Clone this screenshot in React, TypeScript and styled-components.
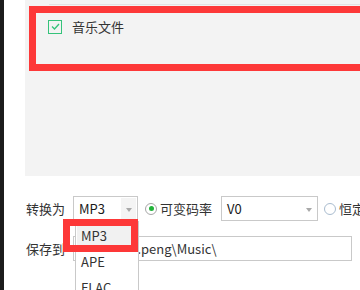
import React from 'react';
import styled, { createGlobalStyle } from 'styled-components';

const GlobalStyle = createGlobalStyle`
  html, body {
    margin: 0;
    padding: 0;
    background: #fff;
  }
  body {
    width: 360px;
    height: 290px;
    overflow: hidden;
    font-family: "Noto Sans CJK SC", "Microsoft YaHei", sans-serif;
    font-size: 13px;
    color: #333;
  }
`;

const Window = styled.div`
  position: relative;
  display: flex;
  width: 360px;
  height: 290px;
  overflow: hidden;
`;

const EdgeStrip = styled.div`
  width: 4px;
  flex-shrink: 0;
  background: #1c1c1c;
`;

const Body = styled.div`
  flex: 1;
  min-width: 0;
  padding-left: 21px;
  display: flex;
  flex-direction: column;
`;

const FilePanel = styled.div`
  height: 176px;
  box-sizing: border-box;
  padding-top: 4px;
  background: #f3f3f3;
`;

const Divider = styled.div`
  height: 1px;
  margin-left: 24px;
  background: #e2e2e2;
`;

const RedFrame = styled.div`
  margin: 1px -40px 0 4px;
  height: 45px;
  padding: 6px 12px 0;
  border: 7px solid #fd3838;
`;

const CheckRow = styled.label`
  display: flex;
  align-items: center;
  gap: 10px;
  height: 15px;
  line-height: 15px;
  color: #333;
`;

const CheckBox = styled.span`
  width: 14px;
  height: 14px;
  box-sizing: border-box;
  border: 1.5px solid #35c37a;
  display: flex;
  align-items: center;
  justify-content: center;
`;

const Form = styled.div`
  margin-top: 20px;
  display: flex;
  flex-direction: column;
  gap: 15px;
`;

const FormRow = styled.div`
  display: flex;
  align-items: center;
  height: 25px;
  white-space: nowrap;
`;

const Label = styled.span`
  width: 47px;
  margin-left: 1px;
  flex-shrink: 0;
  color: #333;
`;

const Combo = styled.div<{ $width: number }>`
  position: relative;
  width: ${p => p.$width}px;
  height: 25px;
  flex-shrink: 0;
  box-sizing: border-box;
  border: 1px solid #c9c9c9;
  background: #fff;
  display: flex;
  align-items: center;
  padding-left: 5px;
  color: #1a1a1a;
`;

const ComboButton = styled.span<{ $open?: boolean }>`
  position: absolute;
  right: 1px;
  top: 1px;
  bottom: 1px;
  width: 15px;
  background: ${p => (p.$open ? '#f4f4f4' : 'transparent')};
  display: flex;
  align-items: center;
  justify-content: center;
  &::after {
    content: '';
    border-left: 3.5px solid transparent;
    border-right: 3.5px solid transparent;
    border-top: 4px solid #a9a9a9;
    margin-top: 2px;
  }
`;

const Radio = styled.span<{ $checked?: boolean; $ml: number }>`
  width: 12px;
  height: 12px;
  margin-left: ${p => p.$ml}px;
  flex-shrink: 0;
  box-sizing: border-box;
  border-radius: 50%;
  border: 1px solid ${p => (p.$checked ? '#a6a6a6' : '#a9bccf')};
  background: #fff;
  display: flex;
  align-items: center;
  justify-content: center;
  &::after {
    content: '';
    display: ${p => (p.$checked ? 'block' : 'none')};
    width: 5px;
    height: 5px;
    border-radius: 50%;
    background: #22b33a;
  }
`;

const RadioText = styled.span<{ $mr?: number }>`
  margin-left: 3px;
  margin-right: ${p => p.$mr ?? 0}px;
  color: #333;
`;

const PathInput = styled.div`
  width: 279px;
  height: 25px;
  box-sizing: border-box;
  border: 1px solid #c9c9c9;
  display: flex;
  align-items: center;
  padding-left: 6px;
  color: #333;
  overflow: hidden;
`;

const DropList = styled.div`
  position: absolute;
  left: 75px;
  top: 221px;
  width: 64px;
  height: 90px;
  box-sizing: border-box;
  padding-top: 2px;
  border: 1px solid #c9c9c9;
  border-top: none;
  background: #fff;
`;

const DropItem = styled.div<{ $active?: boolean }>`
  height: 26px;
  line-height: 26px;
  margin: 0 1px;
  padding-left: 4px;
  background: ${p => (p.$active ? '#f1f1f1' : 'transparent')};
  color: #333;
`;

const Annotation = styled.div`
  position: absolute;
  left: 63px;
  top: 219px;
  width: 75px;
  height: 33px;
  box-sizing: border-box;
  border: 7px solid #fd3838;
`;

const formats = ['MP3', 'APE', 'FLAC'];

const App: React.FC = () => {
  return (
    <Window>
      <GlobalStyle />
      <EdgeStrip />
      <Body>
        <FilePanel>
          <Divider />
          <RedFrame>
            <CheckRow>
              <CheckBox>
                <svg width="9" height="7" viewBox="0 0 9 7">
                  <polyline points="1,3.5 3.5,6 8,1" fill="none" stroke="#35c37a" strokeWidth="1.3" />
                </svg>
              </CheckBox>
              音乐文件
            </CheckRow>
          </RedFrame>
        </FilePanel>
        <Form>
          <FormRow>
            <Label>转换为</Label>
            <Combo $width={65}>
              MP3
              <ComboButton $open />
            </Combo>
            <Radio $checked $ml={7} />
            <RadioText $mr={9}>可变码率</RadioText>
            <Combo $width={97}>
              V0
              <ComboButton />
            </Combo>
            <Radio $ml={6} />
            <RadioText>恒定码率</RadioText>
          </FormRow>
          <FormRow>
            <Label>保存到</Label>
            <PathInput>D:\User\li.peng\Music\</PathInput>
          </FormRow>
        </Form>
      </Body>
      <DropList>
        {formats.map((f, i) => (
          <DropItem key={f} $active={i === 0}>{f}</DropItem>
        ))}
      </DropList>
      <Annotation />
    </Window>
  );
};

export default App;
